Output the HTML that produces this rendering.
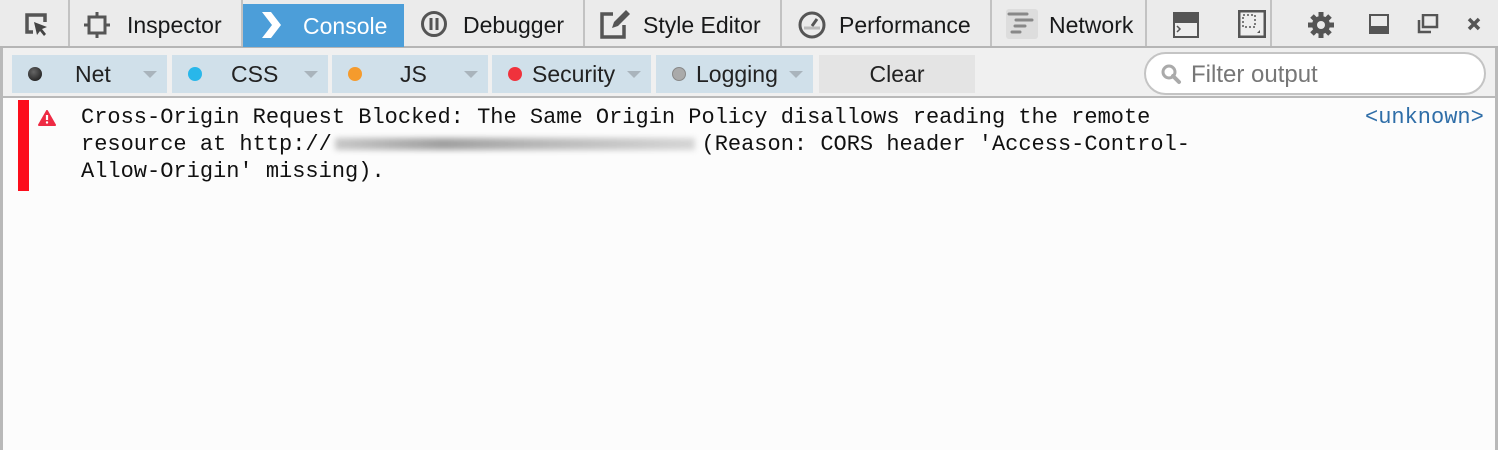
<!DOCTYPE html>
<html><head><style>
*{box-sizing:border-box;margin:0;padding:0}
body{width:1498px;height:450px;background:#fcfcfc;font-family:"Liberation Sans",sans-serif;position:relative;overflow:hidden}
.tabs{position:absolute;left:0;top:0;width:1498px;height:48px;background:#ebebeb;border-bottom:2px solid #b5b5b5}
.t{position:absolute;top:0;height:46px;border-right:2px solid #c2c2c2;font-size:23px;color:#18191a;line-height:51px}
.t span{position:absolute;top:0}
.tool{position:absolute;left:0;top:48px;width:1498px;height:50px;background:#f0f0f0;border-bottom:2px solid #b9b9b9;border-left:3px solid #b9b9b9;border-right:3px solid #b9b9b9}
.f{position:absolute;top:7px;height:38px;background:#d0e0ea;font-size:23px;color:#222;line-height:39px}
.f .d{position:absolute;left:16px;top:12px;width:14px;height:14px;border-radius:50%}
.f .a{position:absolute;right:10px;top:16px;width:0;height:0;border-left:7px solid transparent;border-right:7px solid transparent;border-top:7px solid #a9b4bc}
.content{position:absolute;left:0;top:98px;width:1498px;height:352px;border-left:3px solid #b9b9b9;border-right:3px solid #b9b9b9}
.msg{position:absolute;left:78px;top:6px;font-family:"Liberation Mono",monospace;font-size:22px;line-height:27px;color:#111;white-space:pre}
</style></head><body>
<div class="tabs">
 <div class="t" style="left:0;width:70px"><svg style="position:absolute;left:24px;top:12px" width="26" height="26" viewBox="0 0 26 26"><path d="M9 20H3V3h18v7" fill="none" stroke="#555" stroke-width="3.5"/><path d="M10 10l13 5-5 2 4 5-2 2-4-5-3 4z" fill="#444"/></svg></div>
 <div class="t" style="left:70px;width:173px"><svg style="position:absolute;left:14px;top:12px" width="26" height="26"><rect x="5" y="5" width="16" height="16" fill="none" stroke="#555" stroke-width="3"/><path d="M13 0v5M13 21v5M0 13h5M21 13h5" stroke="#555" stroke-width="3"/></svg><span style="left:57px">Inspector</span></div>
 <div class="t" style="left:243px;width:161px;background:#4c9ed9;color:#fff;border-right:none;top:4px;height:43px;line-height:44px"><svg style="position:absolute;left:17px;top:8px" width="24" height="26"><path d="M2 0h9l10 13-10 13H2l10-13z" fill="#fff"/></svg><span style="left:60px">Console</span></div>
 <div class="t" style="left:404px;width:181px"><svg style="position:absolute;left:16px;top:10px" width="28" height="28"><circle cx="14" cy="14" r="11.5" fill="none" stroke="#555" stroke-width="3"/><path d="M11 8v12M17 8v12" stroke="#555" stroke-width="3"/></svg><span style="left:59px">Debugger</span></div>
 <div class="t" style="left:587px;width:195px"><svg style="position:absolute;left:12px;top:10px" width="32" height="30"><path d="M14 4H3v23h22V15" fill="none" stroke="#555" stroke-width="3.5"/><path d="M13 18l2-6 12-12 4 4-12 12z" fill="#555"/></svg><span style="left:56px">Style Editor</span></div>
 <div class="t" style="left:782px;width:210px"><svg style="position:absolute;left:15px;top:10px" width="30" height="30"><circle cx="15" cy="15" r="12" fill="none" stroke="#555" stroke-width="3"/><path d="M15 16l5-7" stroke="#555" stroke-width="3"/><path d="M7 18h16" stroke="#bbb" stroke-width="3"/></svg><span style="left:57px">Performance</span></div>
 <div class="t" style="left:992px;width:155px"><svg style="position:absolute;left:14px;top:9px" width="32" height="30"><rect width="32" height="30" rx="3" fill="#ddd"/><path d="M3 5h18M10 11h16M9 17h10M6 23h8" stroke="#888" stroke-width="3" stroke-linecap="round"/></svg><span style="left:57px">Network</span></div>
 <div class="t" style="left:1149px;width:123px"><svg style="position:absolute;left:24px;top:12px" width="26" height="26"><rect width="26" height="26" fill="#555"/><rect x="2" y="11" width="22" height="13" fill="#eee"/><path d="M4 14l3 3-3 3" stroke="#555" stroke-width="1.5" fill="none"/></svg><svg style="position:absolute;left:89px;top:10px" width="28" height="28"><rect x="1" y="1" width="26" height="26" fill="#eee" stroke="#555" stroke-width="3"/><rect x="5" y="5" width="12" height="12" fill="none" stroke="#555" stroke-width="1.5" stroke-dasharray="2 2"/><path d="M22 20v3h-3z" fill="#555"/></svg></div>
 <svg style="position:absolute;left:1306px;top:10px" width="30" height="30" viewBox="0 0 30 30"><g fill="#555"><circle cx="15" cy="15" r="9"/><g stroke="#555" stroke-width="5"><path d="M15 2v26M2 15h26M6 6l18 18M24 6L6 24"/></g></g><circle cx="15" cy="15" r="4" fill="#ebebeb"/></svg>
 <svg style="position:absolute;left:1369px;top:14px" width="20" height="20"><rect x="1" y="1" width="18" height="18" fill="none" stroke="#555" stroke-width="2"/><rect x="1" y="12" width="18" height="7" fill="#555"/></svg>
 <svg style="position:absolute;left:1417px;top:14px" width="22" height="20"><rect x="6" y="1" width="14" height="12" fill="none" stroke="#555" stroke-width="2.5"/><path d="M2 6v12h12" fill="none" stroke="#555" stroke-width="2.5"/></svg>
 <svg style="position:absolute;left:1467px;top:17px" width="14" height="14"><path d="M2 2l10 10M12 2L2 12" stroke="#555" stroke-width="3.5"/></svg>
</div>
<div class="tool">
 <div class="f" style="left:9px;width:155px"><i class="d" style="background:radial-gradient(circle at 40% 35%,#666,#111)"></i><span style="position:absolute;left:63px">Net</span><i class="a"></i></div>
 <div class="f" style="left:169px;width:156px"><i class="d" style="background:#29b7ea"></i><span style="position:absolute;left:59px">CSS</span><i class="a"></i></div>
 <div class="f" style="left:329px;width:156px"><i class="d" style="background:#f59b2d"></i><span style="position:absolute;left:68px">JS</span><i class="a"></i></div>
 <div class="f" style="left:489px;width:159px"><i class="d" style="background:#f0323c"></i><span style="position:absolute;left:40px">Security</span><i class="a"></i></div>
 <div class="f" style="left:653px;width:157px"><i class="d" style="background:#aaa;border:1px solid #888"></i><span style="position:absolute;left:40px">Logging</span><i class="a"></i></div>
 <div class="f" style="left:816px;width:156px;background:#e4e4e4;text-align:center">Clear</div>
 <div style="position:absolute;left:1141px;top:4px;width:342px;height:43px;border:2px solid #c4c4c4;border-radius:22px;background:#fff"><svg style="position:absolute;left:14px;top:9px" width="22" height="22"><circle cx="9" cy="9" r="6" fill="none" stroke="#aaa" stroke-width="3"/><path d="M13 13l6 6" stroke="#aaa" stroke-width="4" stroke-linecap="round"/></svg><span style="position:absolute;left:45px;top:7px;font-size:24px;color:#777">Filter output</span></div>
</div>
<div class="content">
 <div style="position:absolute;left:15px;top:2px;width:11px;height:91px;background:#fc0d1b"></div>
 <svg style="position:absolute;left:35px;top:12px" width="18" height="16"><path d="M9 1L17 15H1z" fill="#ee2b44" stroke="#ee2b44" stroke-linejoin="round" stroke-width="2"/><path d="M9 5v5" stroke="#fff" stroke-width="2.2"/><circle cx="9" cy="12.5" r="1.2" fill="#fff"/></svg>
 <div class="msg">Cross-Origin Request Blocked: The Same Origin Policy disallows reading the remote
resource at http://                            (Reason: CORS header 'Access-Control-
Allow-Origin' missing).</div>
 <div style="position:absolute;left:332px;top:40px;width:360px;height:12px;background:linear-gradient(90deg,#bbb,#888 30%,#aaa 60%,#ccc);filter:blur(3px);opacity:.8"></div>
 <div style="position:absolute;left:1362px;top:6px;font-family:'Liberation Mono',monospace;font-size:22px;line-height:27px;color:#2f6ea8">&lt;unknown&gt;</div>
</div>
</body></html>
